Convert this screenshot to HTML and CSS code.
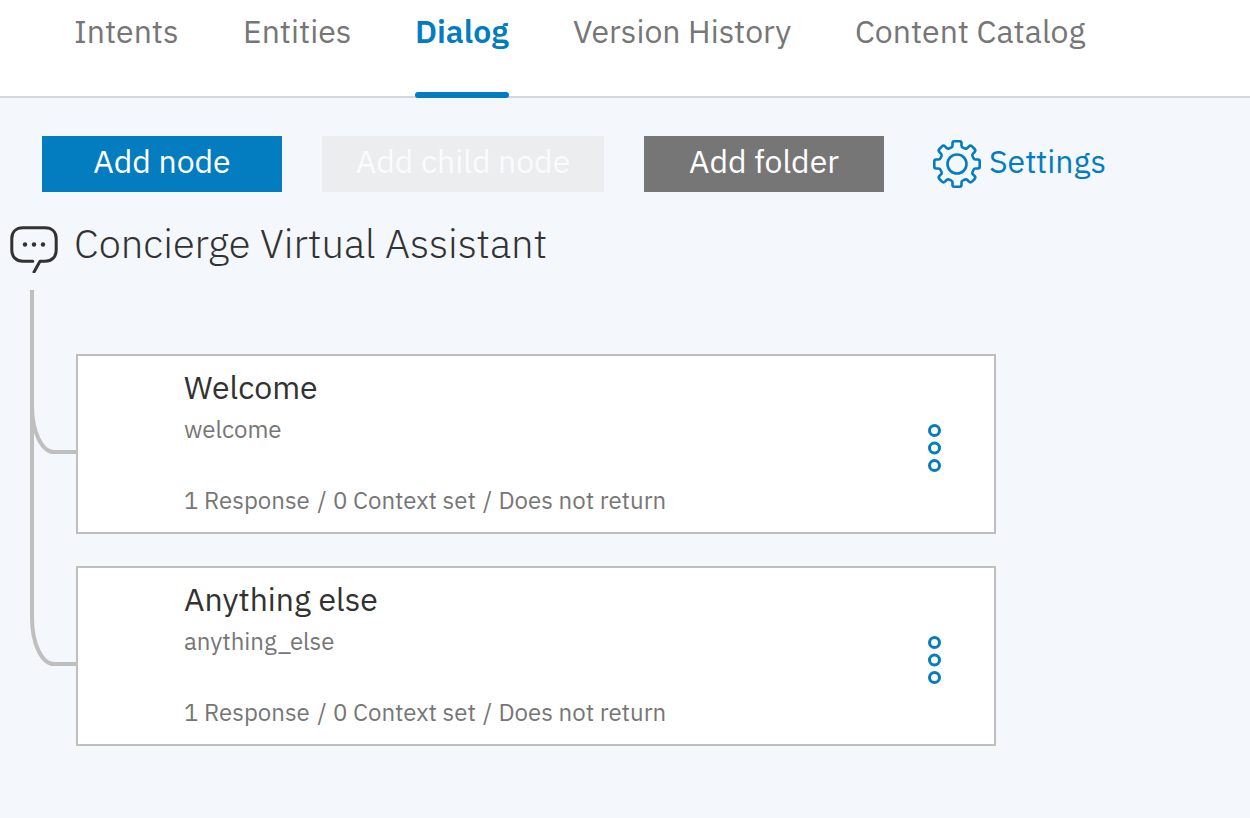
FILE: index.html
```html
<!DOCTYPE html>
<html lang="en">
<head>
<meta charset="utf-8">
<title>Dialog</title>
<link rel="stylesheet" href="styles.css">
</head>
<body>
<nav class="tabs">
  <a class="tab tab-intents">Intents</a>
  <a class="tab tab-entities">Entities</a>
  <a class="tab tab-dialog active">Dialog</a>
  <a class="tab tab-history">Version History</a>
  <a class="tab tab-catalog">Content Catalog</a>
</nav>
<main class="dialog">
  <div class="toolbar">
    <button class="btn primary">Add node</button>
    <button class="btn disabled">Add child node</button>
    <button class="btn secondary">Add folder</button>
    <a class="settings">
      <svg class="gear" viewBox="0 0 48 48" width="48" height="48">
        <path d="M19.5 5.5V3Q19.5 1.3 21.2 1.3H26.8Q28.5 1.3 28.5 3V5.5Q28.5 7 30 7.6L32 8.5Q33.4 9 34.4 8L36 6.4Q37.5 5 39 6.4L41.6 9Q43 10.5 41.6 12L40 13.6Q39 14.6 39.5 16L40.4 18Q41 19.5 42.5 19.5H45Q46.7 19.5 46.7 21.2V26.8Q46.7 28.5 45 28.5H42.5Q41 28.5 40.4 30L39.5 32Q39 33.4 40 34.4L41.6 36Q43 37.5 41.6 39L39 41.6Q37.5 43 36 41.6L34.4 40Q33.4 39 32 39.5L30 40.4Q28.5 41 28.5 42.5V45Q28.5 46.7 26.8 46.7H21.2Q19.5 46.7 19.5 45V42.5Q19.5 41 18 40.4L16 39.5Q14.6 39 13.6 40L12 41.6Q10.5 43 9 41.6L6.4 39Q5 37.5 6.4 36L8 34.4Q9 33.4 8.5 32L7.6 30Q7 28.5 5.5 28.5H3Q1.3 28.5 1.3 26.8V21.2Q1.3 19.5 3 19.5H5.5Q7 19.5 7.6 18L8.5 16Q9 14.6 8 13.6L6.4 12Q5 10.5 6.4 9L9 6.4Q10.5 5 12 6.4L13.6 8Q14.6 9 16 8.5L18 7.6Q19.5 7 19.5 5.5Z"/>
        <circle cx="24" cy="24" r="9.5"/>
      </svg>
      <span>Settings</span>
    </a>
  </div>
  <header class="heading">
    <svg class="chat" viewBox="0 0 48 48" width="48" height="48">
      <path d="M22.8 36.2H13C6 36.2 1.8 31.7 1.8 25.2V13.5C1.8 7 6 2.8 13 2.8H35C42 2.8 46.2 7 46.2 13.5V25.2C46.2 31.7 42 36.2 35 36.2H30L24 47"/>
      <circle cx="15" cy="19.5" r="2.2"/><circle cx="24" cy="19.5" r="2.2"/><circle cx="33" cy="19.5" r="2.2"/>
    </svg>
    <h1>Concierge Virtual Assistant</h1>
  </header>
  <section class="tree">
    <svg class="branches" viewBox="0 0 76 456" width="76" height="456">
      <path d="M32 0V116A22 46 0 0 0 54 162H76"/>
      <path d="M32 0V328A22 46 0 0 0 54 374H76"/>
    </svg>
    <div class="nodes">
      <article class="node">
        <div class="info">
          <h2>Welcome</h2>
          <p class="condition">welcome</p>
          <p class="meta"><span class="m-resp">1 Response</span> <span class="m-slash">/</span> <span class="m-ctx">0 Context set</span> <span class="m-slash">/</span> <span class="m-ret">Does not return</span></p>
        </div>
        <svg class="menu" viewBox="0 0 13 48" width="13" height="48">
          <circle cx="6.5" cy="6.5" r="5"/><circle cx="6.5" cy="24" r="5"/><circle cx="6.5" cy="41.5" r="5"/>
        </svg>
      </article>
      <article class="node">
        <div class="info">
          <h2>Anything else</h2>
          <p class="condition">anything_else</p>
          <p class="meta"><span class="m-resp">1 Response</span> <span class="m-slash">/</span> <span class="m-ctx">0 Context set</span> <span class="m-slash">/</span> <span class="m-ret">Does not return</span></p>
        </div>
        <svg class="menu" viewBox="0 0 13 48" width="13" height="48">
          <circle cx="6.5" cy="6.5" r="5"/><circle cx="6.5" cy="24" r="5"/><circle cx="6.5" cy="41.5" r="5"/>
        </svg>
      </article>
    </div>
  </section>
</main>
</body>
</html>
```
FILE: styles.css
```css
* { box-sizing: border-box; }
body {
  margin: 0;
  height: 818px;
  overflow: hidden;
  background: #f4f7fc;
  color: #323232;
  font-family: "IBM Plex Sans", "Open Sans", sans-serif;
  white-space: nowrap;
}
h1, h2, p { margin: 0; font-weight: 400; }
.tabs {
  display: flex;
  gap: 64px;
  height: 98px;
  padding-left: 74px;
  background: #fff;
  border-bottom: 2px solid #d5d6d9;
}
.tab {
  height: 98px;
  padding-top: 10px;
  font-size: 32px;
  line-height: 42px;
  color: #777677;
}
.tab-intents { width: 105px; }
.tab-entities { width: 108px; }
.tab-dialog { width: 94px; }
.tab-history { width: 218px; }
.tab.active {
  display: flex;
  flex-direction: column;
  justify-content: space-between;
  color: #047cc0;
  font-weight: 600;
}
.tab.active::after {
  content: "";
  height: 6px;
  border-radius: 3px;
  background: #047cc0;
}
.toolbar {
  display: flex;
  gap: 40px;
  padding: 38px 0 0 42px;
}
.btn {
  width: 240px;
  height: 56px;
  padding: 0 0 6px;
  border: 0;
  color: #fff;
  font: 400 32px/50px "IBM Plex Sans", "Open Sans", sans-serif;
}
.primary { background: #047cc0; }
.disabled { width: 282px; background: #ecedee; color: #fafbfd; }
.secondary { background: #777677; }
.settings {
  display: flex;
  gap: 8px;
  margin-left: 9px;
  color: #047cc0;
  font-size: 32px;
  line-height: 50px;
}
.gear {
  margin-top: 4px;
  fill: none;
  stroke: #047cc0;
  stroke-width: 2.6;
}
.heading {
  display: flex;
  gap: 16px;
  height: 98px;
  padding: 33px 0 0 10px;
}
.heading h1 {
  margin-top: -9px;
  font-size: 40px;
  line-height: 54px;
  font-weight: 300;
}
.chat path {
  fill: none;
  stroke: #323232;
  stroke-width: 3;
  stroke-linecap: round;
  stroke-linejoin: round;
}
.chat circle { fill: #323232; }
.tree { display: grid; grid-template-columns: 76px 920px; }
.branches path { fill: none; stroke: #c0bfc0; stroke-width: 4; }
.nodes {
  display: flex;
  flex-direction: column;
  gap: 32px;
  padding-top: 64px;
}
.node {
  display: flex;
  justify-content: space-between;
  height: 180px;
  padding: 9px 53px 0 106px;
  background: #fff;
  border: 2px solid #c0bfc0;
}
.node h2 { font-size: 32px; line-height: 44px; }
.condition { margin-top: 1px; font-size: 24px; line-height: 38px; color: #777677; }
.meta {
  display: flex;
  margin-top: 32px;
  font-size: 24px;
  line-height: 40px;
  color: #777677;
}
.m-resp { width: 133.5px; }
.m-slash { width: 15.5px; }
.m-ctx { width: 150px; }
.menu {
  margin-top: 59px;
  fill: none;
  stroke: #047cc0;
  stroke-width: 3;
}
```
